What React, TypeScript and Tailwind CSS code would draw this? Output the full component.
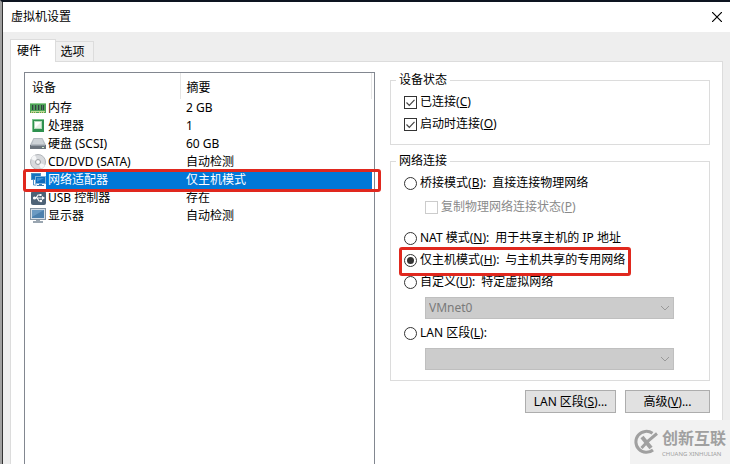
import { useState } from 'react';
import type { ReactNode } from 'react';

interface Device {
    id: string;
    name: string;
    summary: string;
    icon: ReactNode;
}

const devices: Device[] = [
    { id: 'memory', name: '内存', summary: '2 GB', icon: <MemoryIcon /> },
    { id: 'cpu', name: '处理器', summary: '1', icon: <CpuIcon /> },
    { id: 'disk', name: '硬盘 (SCSI)', summary: '60 GB', icon: <DiskIcon /> },
    { id: 'cd', name: 'CD/DVD (SATA)', summary: '自动检测', icon: <CdIcon /> },
    { id: 'network', name: '网络适配器', summary: '仅主机模式', icon: <NetworkIcon /> },
    { id: 'usb', name: 'USB 控制器', summary: '存在', icon: <UsbIcon /> },
    { id: 'display', name: '显示器', summary: '自动检测', icon: <DisplayIcon /> },
];

function MemoryIcon() {
    return (
        <svg width="16" height="16" viewBox="0 0 16 16" className="shrink-0">
            <path d="M0 3h16v10H0z" fill="#4ea457" />
            <path d="M0 3h16v1H0z" fill="#8fce92" />
            <path d="M2 5h2v5H2zM5 5h2v5H5zM8 5h2v5H8zM11 5h3v5h-3z" fill="#2a4a38" />
            <path d="M3 5h1v5H3zM6 5h1v5H6zM9 5h1v5H9zM12 5h1v5h-1z" fill="#587a68" />
            <path d="M1 11h14v1H1z" fill="#b9dc98" />
            <path d="M1 12h1v1H1zM3 12h1v1H3zM5 12h1v1H5zM9 12h1v1H9zM11 12h1v1h-1zM13 12h1v1h-1z" fill="#d9c878" />
        </svg>
    );
}

function CpuIcon() {
    return (
        <svg width="16" height="16" viewBox="0 0 16 16" className="shrink-0">
            <rect x="2" y="1" width="12" height="13" fill="#2f9150" />
            <path d="M2 1h12v1H3v12H2z" fill="#7cc68f" />
            <rect x="4.500" y="3.500" width="7" height="7" fill="#fff" stroke="#b5dcbc" />
            <path d="M5 10l6-6v6z" fill="#e6f1e6" />
        </svg>
    );
}

function DiskIcon() {
    return (
        <svg width="16" height="16" viewBox="0 0 16 16" className="shrink-0">
            <path d="M3.500 2h9L16 9H0z" fill="#b4bac0" />
            <path d="M4 3h8l2 5H2z" fill="#ced3d7" />
            <path d="M0 9h16v4H0z" fill="#6c747d" />
            <path d="M1 9h14v1H1z" fill="#959da6" />
            <path d="M12 11h2v1h-2z" fill="#d8f0d0" />
        </svg>
    );
}

function CdIcon() {
    return (
        <svg width="16" height="16" viewBox="0 0 16 16" className="shrink-0">
            <circle cx="8" cy="8" r="7.500" fill="#d8dadd" stroke="#b2b6ba" />
            <path d="M8 8L1 5a7 7 0 0 1 4-4zM8 8l7 3a7 7 0 0 1-4 4z" fill="#f6f7f8" />
            <circle cx="8" cy="8" r="2.500" fill="#f1f1f1" stroke="#9b9fa3" />
            <circle cx="8" cy="8" r="1" fill="#fff" />
        </svg>
    );
}

function NetworkIcon() {
    return (
        <svg width="16" height="16" viewBox="0 0 16 16" className="shrink-0">
            <rect x="1.500" y="1.500" width="9" height="6" fill="#1673c0" stroke="#4b8fc6" />
            <path d="M3.500 8v5h3" fill="none" stroke="#4b8fc6" />
            <rect x="5.500" y="4.500" width="10" height="7" fill="#0f6dbd" stroke="#7fb2da" />
            <path d="M7 6h7L7 10z" fill="#3c90d4" />
            <path d="M9 12h3v1h2v1H7v-1h2z" fill="#3d7fb5" />
        </svg>
    );
}

function UsbIcon() {
    return (
        <svg width="16" height="16" viewBox="0 0 16 16" className="shrink-0">
            <rect x="1" y="1" width="15" height="14" rx="2" fill="#4d6276" />
            <path d="M4 8h9M6 8l2-3h2M7 8l2 3h2" fill="none" stroke="#fff" strokeWidth="1.200" />
            <circle cx="4.500" cy="8" r="1.600" fill="#fff" />
            <path d="M12 6l3 2-3 2z" fill="#fff" />
            <rect x="9.500" y="4" width="2" height="2" fill="#fff" />
            <circle cx="11" cy="11" r="1.200" fill="#fff" />
        </svg>
    );
}

function DisplayIcon() {
    return (
        <svg width="16" height="16" viewBox="0 0 16 16" className="shrink-0">
            <rect x=".5" y=".5" width="15" height="11" fill="#d5dfe8" stroke="#8493a1" />
            <rect x="2" y="2" width="12" height="8" fill="#4c80ad" />
            <path d="M2 2h12L2 9z" fill="#6b9ac2" />
            <path d="M6 12h4v1h3v2H3v-2h3z" fill="#9aa6b1" />
        </svg>
    );
}

interface CheckFieldProps {
    label: string;
    accessKey: string;
    checked?: boolean;
    disabled?: boolean;
}

function CheckField({ label, accessKey, checked, disabled }: CheckFieldProps) {
    return (
        <label className={`flex h-[22px] items-center gap-[3px] ${disabled ? 'text-[#8a8a8a]' : ''}`}>
            <span className="relative flex">
                <input
                    type="checkbox"
                    defaultChecked={checked}
                    disabled={disabled}
                    className="peer size-[13px] appearance-none border border-[#333] bg-white disabled:border-[#ccc]"
                />
                <svg
                    viewBox="0 0 13 13"
                    className="pointer-events-none absolute inset-0 hidden size-[13px] peer-checked:block"
                    fill="none"
                    stroke="#444"
                    strokeWidth="1.200"
                >
                    <path d="M2.500 6.500l2.800 2.800 5.200-5.500" />
                </svg>
            </span>
            <span>
                {label}(<u>{accessKey}</u>)
            </span>
        </label>
    );
}

interface RadioFieldProps {
    value: string;
    label: string;
    accessKey: string;
    hint?: string;
    mode: string;
    onSelect: (value: string) => void;
    highlighted?: boolean;
}

function RadioField({ value, label, accessKey, hint, mode, onSelect, highlighted }: RadioFieldProps) {
    return (
        <label className="relative flex h-[22px] w-fit items-center gap-[3px]">
            <input
                type="radio"
                name="network-mode"
                value={value}
                checked={mode === value}
                onChange={() => onSelect(value)}
                className="size-[13px] appearance-none rounded-full border border-[#333] bg-clip-content p-[2px] checked:bg-[#333]"
            />
            <span className="flex gap-1.5 whitespace-nowrap">
                <span>
                    {label}(<u>{accessKey}</u>):
                </span>
                {hint && <span>{hint}</span>}
            </span>
            {highlighted && (
                <span className="pointer-events-none absolute -top-[2px] -right-[6px] -bottom-[5px] -left-[5px] z-10 rounded-[3px] border-3 border-[#e0281e]" />
            )}
        </label>
    );
}

function DisabledSelect({ label, option }: { label: string; option: string }) {
    return (
        <div className="relative mt-1 mr-[35px] ml-[21px]">
            <select
                aria-label={label}
                disabled
                className="block h-[22px] w-full appearance-none border border-[#bfbfbf] bg-[#ccc] px-[3px] text-[#7a7a7a] opacity-100"
            >
                <option>{option}</option>
            </select>
            <svg
                viewBox="0 0 10 6"
                className="pointer-events-none absolute top-2 right-1 h-1.5 w-2.5"
                fill="none"
                stroke="#999"
            >
                <path d="M1 1l4 4 4-4" />
            </svg>
        </div>
    );
}

function Watermark() {
    return (
        <div className="absolute right-0 bottom-0 flex h-11 w-[100px] items-center gap-1 bg-[#f2f2f2] pl-[3px] text-[#a0a0a0]">
            <svg width="25" height="26" viewBox="0 0 25 26" className="shrink-0" fill="none" stroke="currentColor">
                <path d="M19.500 4.300A10.500 10.500 0 1 0 20 21" strokeWidth="3" />
                <path d="M9 8l9 11" strokeWidth="4" />
                <path d="M24 4.500L15 12l-6.500 7" strokeWidth="3" />
            </svg>
            <div className="flex flex-col whitespace-nowrap">
                <span className="text-[16px] leading-6 font-bold">创新互联</span>
                <span className="text-[6px] leading-[8px]">CHUANG XINHULIAN</span>
            </div>
        </div>
    );
}

export default function App() {
    const [tab, setTab] = useState('hardware');
    const [selected, setSelected] = useState('network');
    const [mode, setMode] = useState('host');

    return (
        <div className="relative flex min-h-screen flex-col border-t-2 border-l-2 border-t-[#0d1420] border-l-[#a0a0a0] bg-[#eee] font-['Noto_Sans','Noto_Sans_CJK_SC',sans-serif] text-[12px] leading-[18px] text-black">
            <div className="flex grow flex-col border-l border-[#333]">
                <header className="flex h-[30px] items-center justify-between bg-white pr-2 pl-2">
                    <h1>虚拟机设置</h1>
                    <button type="button" aria-label="关闭" className="flex">
                        <svg width="10" height="10" viewBox="0 0 10 10" stroke="#000" strokeWidth="1.200">
                            <path d="M0 0l10 10M10 0L0 10" />
                        </svg>
                    </button>
                </header>

                <main className="flex grow flex-col pt-[7px] pr-[7px] pl-[7px]">
                    <div role="tablist" className="flex items-end">
                        <button
                            type="button"
                            role="tab"
                            aria-selected={tab === 'hardware'}
                            onClick={() => setTab('hardware')}
                            className="relative z-10 -mb-px h-[23px] w-[46px] border border-b-0 border-[#dcdcdc] bg-white pr-2"
                        >
                            硬件
                        </button>
                        <button
                            type="button"
                            role="tab"
                            aria-selected={tab === 'options'}
                            onClick={() => setTab('options')}
                            className="h-5 w-[38px] border border-b-0 border-l-0 border-[#dcdcdc] bg-[#f0f0f0] pr-1"
                        >
                            选项
                        </button>
                    </div>

                    <div className="grid grow grid-cols-[351fr_320fr] gap-[15px] border border-b-0 border-[#dcdcdc] bg-white pt-[10px] pr-3 pl-[13px]">
                        <div className="border border-b-0 border-[#828790] pr-[2px]">
                            <table className="w-full table-fixed border-collapse text-left">
                                <thead>
                                    <tr className="h-[26px]">
                                        <th className="w-[155px] border-r border-[#e5e5e5] pt-1 pl-[7px] font-normal">设备</th>
                                        <th className="border-r border-[#e5e5e5] pt-1 pl-1.5 font-normal">摘要</th>
                                    </tr>
                                </thead>
                                <tbody>
                                    {devices.map((device) => {
                                        const active = device.id === selected;
                                        return (
                                            <tr
                                                key={device.id}
                                                onClick={() => setSelected(device.id)}
                                                className={`relative h-[18px] ${active ? 'text-white' : ''}`}
                                            >
                                                <td className="p-0">
                                                    <div className="flex h-[18px] items-center pl-[5px]">
                                                        {device.icon}
                                                        <span className={`grow pl-[2px] whitespace-nowrap ${active ? 'bg-[#0078d7]' : ''}`}>
                                                            {device.name}
                                                        </span>
                                                    </div>
                                                </td>
                                                <td className={`p-0 pl-1.5 ${active ? 'bg-[#0078d7]' : ''}`}>
                                                    {device.summary}
                                                    {active && (
                                                        <span className="pointer-events-none absolute -top-[2px] -right-[9px] -bottom-[3px] -left-[2px] z-10 rounded-[3px] border-3 border-[#e0281e]" />
                                                    )}
                                                </td>
                                            </tr>
                                        );
                                    })}
                                </tbody>
                            </table>
                        </div>

                        <div className="flex flex-col">
                            <fieldset className="border border-[#dcdcdc] px-[13px] pt-[3px] pb-[9px]">
                                <legend className="-ml-2 px-[3px] leading-4">设备状态</legend>
                                <CheckField label="已连接" accessKey="C" checked />
                                <CheckField label="启动时连接" accessKey="O" checked />
                            </fieldset>

                            <fieldset className="mt-2 border border-[#dcdcdc] pt-[3px] pb-[10px] pl-[13px]">
                                <legend className="-ml-2 px-[3px] leading-4">网络连接</legend>
                                <RadioField value="bridge" label="桥接模式" accessKey="B" hint="直接连接物理网络" mode={mode} onSelect={setMode} />
                                <div className="mt-0.5 mb-[9px] pl-[21px]">
                                    <CheckField label="复制物理网络连接状态" accessKey="P" disabled />
                                </div>
                                <RadioField value="nat" label="NAT 模式" accessKey="N" hint="用于共享主机的 IP 地址" mode={mode} onSelect={setMode} />
                                <RadioField value="host" label="仅主机模式" accessKey="H" hint="与主机共享的专用网络" mode={mode} onSelect={setMode} highlighted />
                                <RadioField value="custom" label="自定义" accessKey="U" hint="特定虚拟网络" mode={mode} onSelect={setMode} />
                                <DisabledSelect label="虚拟网络" option="VMnet0" />
                                <div className="mt-[3px]">
                                    <RadioField value="lan" label="LAN 区段" accessKey="L" mode={mode} onSelect={setMode} />
                                </div>
                                <DisabledSelect label="LAN 区段" option="" />
                            </fieldset>

                            <div className="mt-[9px] flex justify-end gap-[9px]">
                                <button type="button" className="h-[23px] w-[91px] border border-[#adadad] bg-[#e1e1e1]">
                                    LAN 区段(<u>S</u>)...
                                </button>
                                <button type="button" className="h-[23px] w-[85px] border border-[#adadad] bg-[#e1e1e1]">
                                    高级(<u>V</u>)...
                                </button>
                            </div>
                        </div>
                    </div>
                </main>
            </div>
            <Watermark />
        </div>
    );
}
